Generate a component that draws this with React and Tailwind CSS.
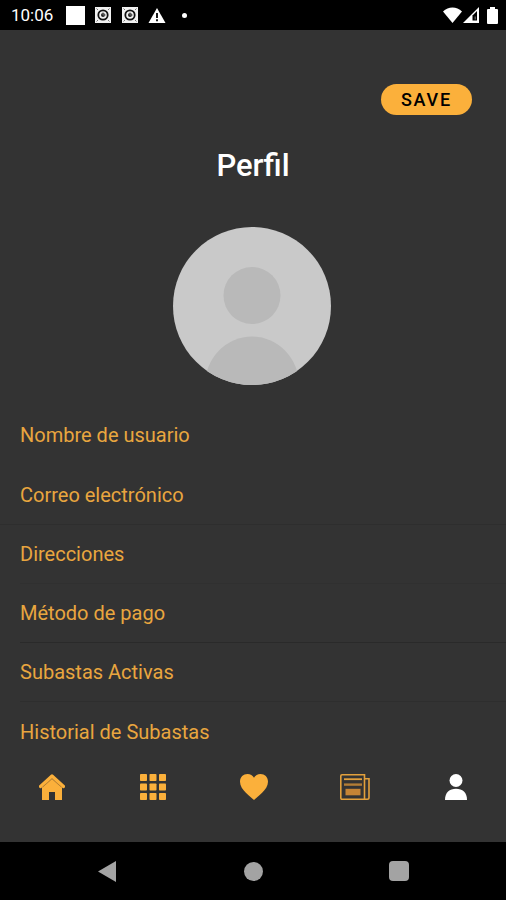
import React from "react";

const rows = [
  { label: "Nombre de usuario", height: "h-[60px]", line: "", inset: "" },
  { label: "Correo electrónico", height: "h-[60px]", line: "border-b border-[#2e2e2e]", inset: "" },
  { label: "Direcciones", height: "h-[59px]", line: "border-b border-[#303030]", inset: "ml-5" },
  { label: "Método de pago", height: "h-[59px]", line: "border-b border-[#2a2a2a]", inset: "ml-5" },
  { label: "Subastas Activas", height: "h-[59px]", line: "border-b border-[#2e2e2e]", inset: "ml-5" },
  { label: "Historial de Subastas", height: "h-[59px]", line: "", inset: "ml-5" },
];

function VaultIcon() {
  return (
    <svg width="16" height="16" viewBox="0 0 16 16" aria-hidden="true">
      <rect width="16" height="16" fill="#f2f2f2" />
      <path d="M1.500 1.500l1.500 1.500M14.500 1.500 13 3M1.500 14.500 3 13M14.500 14.500 13 13" stroke="#666" strokeWidth="0.900" />
      <circle cx="8" cy="8" r="4.700" fill="none" stroke="#111" strokeWidth="1.800" />
      <circle cx="8" cy="8" r="2" fill="#222" />
      <path d="M8 5v3h3" fill="none" stroke="#777" strokeWidth="0.800" />
    </svg>
  );
}

function StatusBar() {
  return (
    <header className="flex h-[30px] items-center justify-between bg-black pl-[11px] pr-[8px] text-white">
      <div className="flex items-center">
        <span className="w-[55px] text-[17px] leading-5">10:06</span>
        <span className="mr-[10px] size-[19px] bg-white" />
        <span className="mr-[11px]"><VaultIcon /></span>
        <span className="mr-[10px]"><VaultIcon /></span>
        <svg width="18" height="15" viewBox="0 0 18 15" aria-hidden="true">
          <path d="M9 0 17.5 15H.5z" fill="#fff" />
          <path d="M9 5v5M9 11.2v2" stroke="#000" strokeWidth="1.8" />
        </svg>
        <span className="ml-[16px] size-[5px] rounded-full bg-white" />
      </div>
      <div className="flex items-center">
        <svg width="19" height="16" viewBox="0 0 19 16" aria-hidden="true">
          <path d="M0 4.5C5.400 -.8 13.600 -.8 19 4.500L9.500 16z" fill="#fff" />
        </svg>
        <svg className="ml-px" width="16" height="16" viewBox="0 0 16 16" aria-hidden="true">
          <path d="M16 0v16H0z" fill="#fff" />
          <path d="M9.500 8.500 14 4v9.500H9.500z" fill="#000" />
          <path d="M11.500 9.500h1.500v3h-1.500z" fill="#555" />
        </svg>
        <svg className="ml-[8px]" width="11" height="17" viewBox="0 0 11 17" aria-hidden="true">
          <path d="M3 0h5v2h2q1 0 1 1v13q0 1-1 1H1q-1 0-1-1V3q0-1 1-1h2z" fill="#fff" />
        </svg>
      </div>
    </header>
  );
}

function Avatar() {
  return (
    <svg className="size-[158px]" viewBox="0 0 158 158" role="img" aria-label="Foto de perfil">
      <defs>
        <clipPath id="avatar-clip"><circle cx="79" cy="79" r="79" /></clipPath>
      </defs>
      <g clipPath="url(#avatar-clip)">
        <rect width="158" height="158" fill="#c9c9c9" />
        <circle cx="79" cy="68.500" r="28.500" fill="#b9b9b9" />
        <ellipse cx="79" cy="158" rx="47" ry="48.500" fill="#b9b9b9" />
      </g>
    </svg>
  );
}

const tabs = [
  {
    label: "Inicio",
    icon: (
      <svg width="26" height="26" viewBox="0 0 26 26">
        <path d="M1.500 12.500 13 2l11.500 10.500" fill="none" stroke="#fbb03b" strokeWidth="3.200" strokeLinecap="round" strokeLinejoin="round" />
        <path d="M3 12.800 13 4l10 8.800V26h-7v-8h-6v8H3z" fill="#fbb03b" />
        <path d="M3.500 13.200 13 4.800l9.500 8.400" fill="none" stroke="#a97832" strokeWidth="0.900" />
      </svg>
    ),
  },
  {
    label: "Categorías",
    icon: (
      <svg width="26" height="26" viewBox="0 0 26 26" fill="#fbb03b">
        {[0, 9.5, 19].map((y) =>
          [0, 9.5, 19].map((x) => <rect key={x + "-" + y} x={x} y={y} width="7" height="7" rx="0.8" />)
        )}
      </svg>
    ),
  },
  {
    label: "Favoritos",
    icon: (
      <svg width="28" height="26" viewBox="0 0 28 26">
        <path d="M14 26C11 23 0 16 0 7.800 0 3 3.300 0 7.500 0 10.300 0 12.800 1.300 14 3.800 15.200 1.300 17.700 0 20.500 0 24.700 0 28 3 28 7.800 28 16 17 23 14 26z" fill="#fbb03b" />
      </svg>
    ),
  },
  {
    label: "Noticias",
    icon: (
      <svg width="30" height="26" viewBox="0 0 30 26" fill="none" stroke="#e2a03c">
        <path d="M2 .8h22.500v24.400H2Q.8 25.200.8 24V2Q.8.800 2 .8z" strokeWidth="1.600" />
        <path d="M24.500 4.800H29V23.500q0 1.700-1.700 1.700H24" strokeWidth="1.600" />
        <path d="M4 5.200h18" strokeWidth="1.800" />
        <path d="M4 10.600h18" strokeWidth="2.400" stroke="#b37d35" />
        <rect x="5.500" y="14.800" width="15" height="6.500" fill="#c58435" stroke="none" />
      </svg>
    ),
  },
  {
    label: "Perfil",
    icon: (
      <svg width="22" height="26" viewBox="0 0 22 26" fill="#fff">
        <circle cx="11" cy="6.500" r="6.500" />
        <path d="M0 26C0 18.500 4.500 14.800 11 14.800S22 18.500 22 26z" />
      </svg>
    ),
  },
];

export default function App() {
  return (
    <div className="flex min-h-screen flex-col bg-[#333333] font-[Roboto,sans-serif]">
      <StatusBar />
      <main className="flex flex-1 flex-col">
        <div className="flex justify-end pr-[34px] pt-[54px]">
          <button type="button" className="h-[31px] rounded-full bg-[#fbb03b] px-5 text-[18px] font-medium leading-5 tracking-widest text-black">
            SAVE
          </button>
        </div>
        <h1 className="mt-[31px] text-center text-[31px] font-medium leading-10 text-white">Perfil</h1>
        <div className="mt-[41px] flex justify-center pr-0.5">
          <Avatar />
        </div>
        <ul className="mt-5">
          {rows.map((row) => (
            <li key={row.label} className={row.inset}>
              <button
                type="button"
                className={`flex w-full items-center text-left text-[20px] leading-6 text-[#e9a63f] ${row.height} ${row.line} ${row.inset ? "" : "pl-5"}`}
              >
                {row.label}
              </button>
            </li>
          ))}
        </ul>
      </main>
      <nav aria-label="Principal" className="grid h-[81px] grid-cols-5 pb-[29px] pl-0.5">
        {tabs.map((tab) => (
          <button key={tab.label} type="button" aria-label={tab.label} className="flex items-center justify-center">
            {tab.icon}
          </button>
        ))}
      </nav>
      <footer className="grid h-[58px] grid-cols-3 bg-black px-[34px]">
        <button type="button" aria-label="Atrás" className="flex items-center justify-center">
          <svg width="18" height="21" viewBox="0 0 18 21"><path d="M0 10.500 18 0v21z" fill="#a3a3a3" /></svg>
        </button>
        <button type="button" aria-label="Inicio del sistema" className="flex items-center justify-center">
          <span className="size-[19px] rounded-full bg-[#a3a3a3]" />
        </button>
        <button type="button" aria-label="Recientes" className="flex items-center justify-center">
          <span className="size-5 rounded-sm bg-[#a3a3a3]" />
        </button>
      </footer>
    </div>
  );
}
